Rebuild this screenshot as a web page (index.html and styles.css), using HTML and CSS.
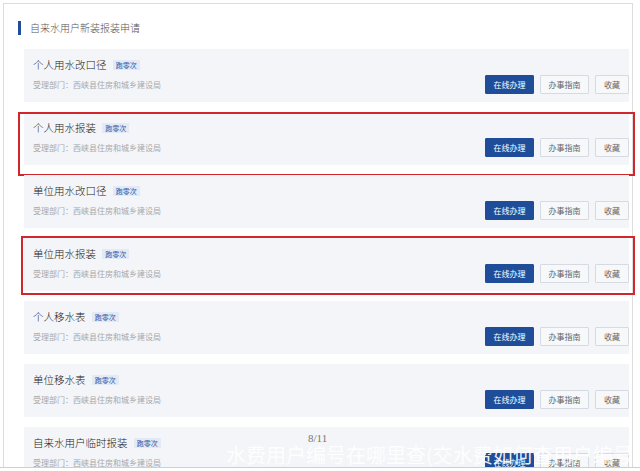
FILE: index.html
```html
<!DOCTYPE html>
<html lang="zh-CN">
<head>
  <meta charset="UTF-8" />
  <meta name="viewport" content="width=device-width, initial-scale=1.0"/>
  <title>自来水用户新装报装申请</title>
  <link rel="stylesheet" href="styles.css">
</head>
<body>

<div class="panel">
  <div class="panel-title">自来水用户新装报装申请</div>

  <div class="item">
    <div class="info">
      <div class="name">个人用水改口径 <span class="tag">跑零次</span></div>
      <div class="dept">受理部门：西峡县住房和城乡建设局</div>
    </div>
    <div class="actions">
      <button class="btn btn-main">在线办理</button>
      <button class="btn">办事指南</button>
      <button class="btn btn-small">收藏</button>
    </div>
  </div>

  <div class="item mark mark-a">
    <div class="info">
      <div class="name">个人用水报装 <span class="tag">跑零次</span></div>
      <div class="dept">受理部门：西峡县住房和城乡建设局</div>
    </div>
    <div class="actions">
      <button class="btn btn-main">在线办理</button>
      <button class="btn">办事指南</button>
      <button class="btn btn-small">收藏</button>
    </div>
  </div>

  <div class="item">
    <div class="info">
      <div class="name">单位用水改口径 <span class="tag">跑零次</span></div>
      <div class="dept">受理部门：西峡县住房和城乡建设局</div>
    </div>
    <div class="actions">
      <button class="btn btn-main">在线办理</button>
      <button class="btn">办事指南</button>
      <button class="btn btn-small">收藏</button>
    </div>
  </div>

  <div class="item mark mark-b">
    <div class="info">
      <div class="name">单位用水报装 <span class="tag">跑零次</span></div>
      <div class="dept">受理部门：西峡县住房和城乡建设局</div>
    </div>
    <div class="actions">
      <button class="btn btn-main">在线办理</button>
      <button class="btn">办事指南</button>
      <button class="btn btn-small">收藏</button>
    </div>
  </div>

  <div class="item">
    <div class="info">
      <div class="name">个人移水表 <span class="tag">跑零次</span></div>
      <div class="dept">受理部门：西峡县住房和城乡建设局</div>
    </div>
    <div class="actions">
      <button class="btn btn-main">在线办理</button>
      <button class="btn">办事指南</button>
      <button class="btn btn-small">收藏</button>
    </div>
  </div>

  <div class="item">
    <div class="info">
      <div class="name">单位移水表 <span class="tag">跑零次</span></div>
      <div class="dept">受理部门：西峡县住房和城乡建设局</div>
    </div>
    <div class="actions">
      <button class="btn btn-main">在线办理</button>
      <button class="btn">办事指南</button>
      <button class="btn btn-small">收藏</button>
    </div>
  </div>

  <div class="item">
    <div class="info">
      <div class="name">自来水用户临时报装 <span class="tag">跑零次</span></div>
      <div class="dept">受理部门：西峡县住房和城乡建设局</div>
    </div>
    <div class="actions">
      <button class="btn btn-main">在线办理</button>
      <button class="btn">办事指南</button>
      <button class="btn btn-small">收藏</button>
    </div>
  </div>
</div>

<div class="counter">8/11</div>
<div class="caption">水费用户编号在哪里查(交水费如何查用户编号)</div>
<div class="bottom-edge"></div>

</body>
</html>
```

FILE: styles.css
```css
html, body {
  height: 100%;
  overflow: hidden;
}
body {
  margin: 0;
  background: #fff;
  font-family: "Noto Sans CJK SC", "Noto Sans", sans-serif;
  color: #333;
}
.panel {
  margin: 3px 7px 0 3px;
  border: 1px solid #dcdcdc;
  padding: 17px 3px 0 14px;
}
.panel-title {
  border-left: 3px solid #1f4d9a;
  padding-left: 9px;
  height: 14px;
  line-height: 14px;
  font-size: 10px;
  font-weight: 300;
  color: #555;
  margin-bottom: 14px;
}
.item {
  position: relative;
  margin-left: 6px;
  height: 53px;
  box-sizing: border-box;
  padding: 8px 0 8px 9px;
  margin-bottom: 10px;
  background: #f4f5f8;
  display: flex;
  justify-content: space-between;
  align-items: flex-end;
}
.info {
  align-self: flex-start;
}
.name {
  font-size: 10.5px;
  font-weight: 300;
  line-height: 16px;
  color: #222;
}
.tag {
  display: inline-block;
  margin-left: 4px;
  padding: 0 3px;
  height: 10px;
  line-height: 10px;
  font-size: 7px;
  font-weight: 400;
  color: #2f5aa8;
  background: #e3eaf6;
  vertical-align: 1px;
}
.dept {
  margin-top: 6px;
  font-size: 8px;
  line-height: 12px;
  color: #a8a8a8;
}
.actions {
  display: flex;
  gap: 6px;
}
.btn {
  width: 49px;
  height: 19px;
  padding: 0;
  font-family: inherit;
  font-size: 8px;
  color: #666;
  background: #f7f8fa;
  border: 1px solid #d6dbe3;
  border-radius: 1px;
}
.btn-main {
  background: #1f4d9a;
  border-color: #1f4d9a;
  color: #fff;
}
.btn-small {
  width: 34px;
}
.mark::after {
  content: "";
  position: absolute;
  border: 2px solid #d0262c;
  pointer-events: none;
}
.mark-a::after {
  top: 0;
  left: -6px;
  right: -6px;
  bottom: -11px;
}
.mark-b::after {
  top: -2px;
  left: -3px;
  right: -6px;
  bottom: -4px;
}
.counter {
  position: absolute;
  left: 308px;
  top: 432px;
  font-family: "Liberation Serif", serif;
  font-size: 11px;
  color: #777;
}
.caption {
  position: absolute;
  left: 226px;
  top: 442px;
  white-space: nowrap;
  font-size: 20px;
  line-height: 26px;
  color: rgba(255, 255, 255, 0.92);
}
.bottom-edge {
  position: absolute;
  left: 0;
  right: 0;
  top: 467px;
  height: 4px;
  background: #fff;
  border-top: 1px solid #cfcfcf;
}
```
